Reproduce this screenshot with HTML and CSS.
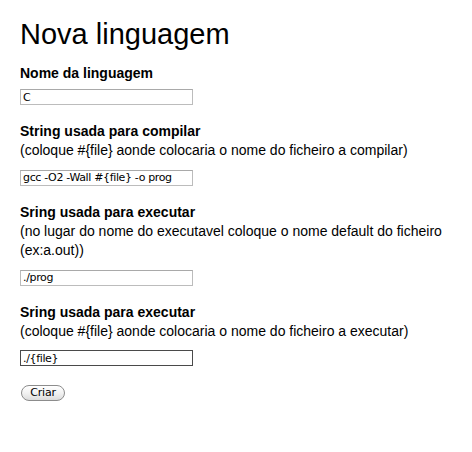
FILE: index.html
```html
<!DOCTYPE html>
<html lang="pt">
<head>
<meta charset="utf-8">
<title>Nova linguagem</title>
<link rel="stylesheet" href="styles.css">
</head>
<body>
<div class="page">
  <h1 class="title">Nova linguagem</h1>
  <form class="form">
    <div class="field first">
      <label class="label" for="nome">Nome da linguagem</label>
      <input class="input" id="nome" type="text" value="C">
    </div>
    <div class="field">
      <label class="label" for="comp">String usada para compilar</label>
      <div class="hint">(coloque #{file} aonde colocaria o nome do ficheiro a compilar)</div>
      <input class="input" id="comp" type="text" value="gcc -O2 -Wall #{file} -o prog">
    </div>
    <div class="field">
      <label class="label" for="exe">Sring usada para executar</label>
      <div class="hint">(no lugar do nome do executavel coloque o nome default do ficheiro (ex:a.out))</div>
      <input class="input" id="exe" type="text" value="./prog">
    </div>
    <div class="field">
      <label class="label" for="run">Sring usada para executar</label>
      <div class="hint">(coloque #{file} aonde colocaria o nome do ficheiro a executar)</div>
      <input class="input focused" id="run" type="text" value="./{file}">
    </div>
    <div class="actions">
      <button class="button" type="button">Criar</button>
    </div>
  </form>
</div>
</body>
</html>
```
FILE: styles.css
```css
html, body {
  margin: 0;
  padding: 0;
  background: #fff;
}
.page {
  padding: 18px 0 0 20px;
  font-family: "Liberation Sans", Arial, Helvetica, sans-serif;
  font-size: 14px;
  color: #000;
}
.title {
  margin: 0;
  font-size: 29px;
  font-weight: normal;
  line-height: 33px;
  letter-spacing: 0;
}
.form {
  margin: 0;
}
.field {
  display: flex;
  flex-direction: column;
  align-items: flex-start;
  margin-top: 17px;
}
.field.first {
  margin-top: 13px;
}
.label {
  font-weight: bold;
  line-height: 19px;
  display: block;
}
.hint {
  line-height: 19.5px;
  margin-bottom: 3px;
}
.input {
  box-sizing: border-box;
  width: 173px;
  height: 16px;
  margin: 6px 0 0 0;
  padding: 0 2px;
  border: 1px solid #bcbcbc;
  border-top-color: #a9a9a9;
  font-family: "DejaVu Sans", Verdana, sans-serif;
  font-size: 11px;
  letter-spacing: -0.35px;
  color: #000;
  background: #fff;
  outline: none;
}
.input.focused {
  border-color: #4a4a4a;
}
.actions {
  margin-top: 17px;
}
.button {
  box-sizing: border-box;
  width: 44px;
  height: 16px;
  padding: 0;
  border: 1px solid #8c8c8c;
  border-radius: 8px;
  background: linear-gradient(#ffffff, #f2f2f2 50%, #dcdcdc);
  font-family: "DejaVu Sans", Verdana, sans-serif;
  font-size: 11px;
  letter-spacing: -0.2px;
  line-height: 14px;
  color: #000;
  margin-left: 1px;
}
```
